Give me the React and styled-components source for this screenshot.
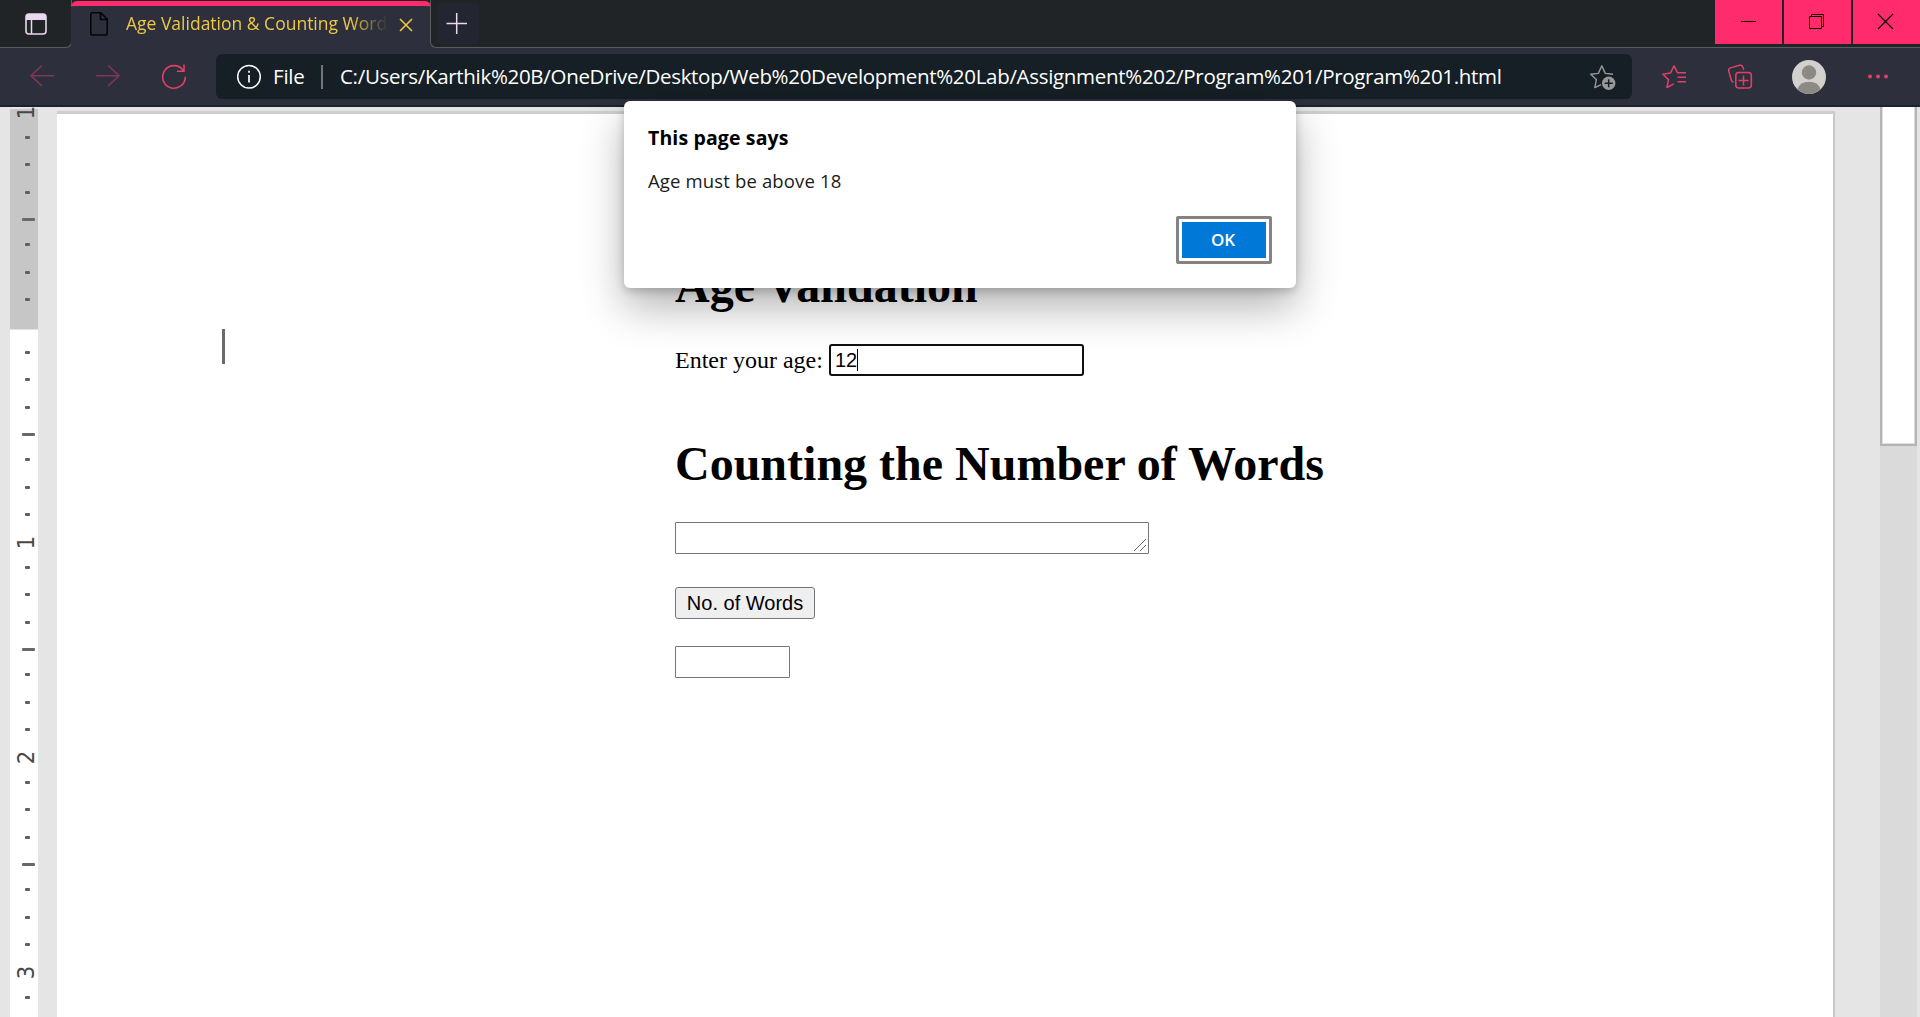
import React from "react";
import styled, { createGlobalStyle } from "styled-components";

const GlobalStyle = createGlobalStyle`
  * { box-sizing: border-box; }
  html, body { margin: 0; padding: 0; overflow: hidden; }
`;

const uiFont = `"Open Sans", "Noto Sans", sans-serif`;
const accent = "#e03f66";
const chrome = "#2d303c";
const dark = "#212427";
const edge = "#5a5d5e";

const Window = styled.div`
  position: relative;
  width: 1920px;
  height: 1017px;
  display: flex;
  flex-direction: column;
  overflow: hidden;
  background: #e5e5e5;
  font-family: ${uiFont};
`;

const TabStrip = styled.header`
  height: 48px;
  flex: none;
  display: flex;
  background: ${chrome};
`;

const StripStart = styled.div`
  width: 72px;
  display: flex;
  background: ${dark};
  border-right: 1px solid ${edge};
  border-bottom: 1px solid ${edge};
  border-radius: 0 0 6px 0;
  padding: 12px 0 0 24px;
`;

const TabSlot = styled.div`
  width: 358px;
  background: linear-gradient(${dark} 20px, ${chrome} 20px);
`;

const Tab = styled.div`
  height: 47px;
  margin: 1px -1px 0;
  display: flex;
  border-top: 5px solid #ff2b6d;
  border-radius: 6px 6px 0 0;
  background: ${chrome};
  padding: 0 13px 0 18px;
`;

const TabTitle = styled.div`
  width: 262px;
  margin: 0 4px 0 17px;
  overflow: hidden;
  white-space: nowrap;
  color: #edc746;
  font-size: 17.5px;
  line-height: 24px;
  padding-top: 5px;
  letter-spacing: ${(p) => p.$track}px;
  mask-image: linear-gradient(to right, #000 225px, transparent 262px);
`;

const StripEnd = styled.div`
  flex: 1;
  display: flex;
  background: ${dark};
  border-left: 1px solid ${edge};
  border-bottom: 1px solid ${edge};
  border-radius: 0 0 0 6px;
  padding-left: 6px;
`;

const NewTab = styled.button`
  width: 42px;
  height: 41px;
  margin: 3px auto 0 0;
  padding: 0;
  border: 0;
  border-radius: 3px;
  background: #232530;
`;

const WindowButtons = styled.div`
  display: flex;
  gap: 2px;
  height: 44px;
`;

const WindowButton = styled.button`
  width: 67px;
  height: 44px;
  padding: 0;
  border: 0;
  background: #ff2b6d;
`;

const Toolbar = styled.nav`
  height: 59px;
  flex: none;
  display: flex;
  align-items: flex-start;
  padding: 6px 24px;
  background: ${chrome};
  border-bottom: 2px solid #182430;
`;

const ToolGroup = styled.div`
  display: flex;
  gap: ${(p) => p.$gap}px;
  padding-top: 5px;
`;

const Address = styled.div`
  width: 1416px;
  height: 45px;
  margin: 0 24px;
  display: flex;
  align-items: center;
  background: #151f25;
  border-radius: 6px;
  padding: 0 10px 0 15px;
  color: #fff;
  font-size: 20.5px;
  line-height: 28px;
  white-space: nowrap;
`;

const Scheme = styled.span`
  width: 48px;
  margin-left: 6px;
  padding-bottom: 2px;
  letter-spacing: -0.2px;
`;

const Divider = styled.span`
  width: 2px;
  height: 24px;
  background: #70767a;
`;

const Url = styled.span`
  flex: 1;
  margin-left: 17px;
  padding-bottom: 2px;
  letter-spacing: ${(p) => p.$track}px;
`;

const Icon = styled.svg`
  display: block;
  flex: none;
  fill: none;
`;

const Viewport = styled.main`
  flex: 1;
  display: flex;
  overflow: hidden;
`;

const Ruler = styled.aside`
  width: 27.5px;
  height: 910px;
  margin: 0 19.5px 0 10px;
  padding-top: 3.6px;
  display: flex;
  flex-direction: column;
  flex: none;
  background: linear-gradient(#e5e5e5 1.5px, #c6c6c6 2px, #c6c6c6 221.5px, #fff 223.5px);
`;

const Step = styled.div`
  height: ${(p) => p.$size}px;
  flex: none;
`;

const Tick = styled.div`
  width: ${(p) => (p.$long ? 13 : 5)}px;
  height: 3px;
  margin-left: ${(p) => (p.$long ? 12 : 15)}px;
  background: ${(p) => (p.$long ? "#686868" : "#606060")};
  border-radius: 1px;
`;

const Digit = styled.div`
  width: 25px;
  height: 3px;
  margin-left: 4px;
  color: #484848;
  font-family: "DejaVu Sans Condensed", "DejaVu Sans", sans-serif;
  font-size: 23.5px;
  font-stretch: condensed;
  line-height: 3px;
  text-align: center;
  transform: rotate(-90deg);
`;

const Sheet = styled.section`
  width: 1778px;
  margin-top: 4px;
  display: flex;
  align-items: flex-start;
  flex: none;
  height: 920px;
  background: #fff;
  border-top: 3px solid #cecece;
  border-right: 2px solid #c8c8c8;
`;

const SheetCaret = styled.span`
  width: 3px;
  height: 35px;
  margin: 215px 0 0 165px;
  background: #6a6a6a;
`;

const Form = styled.form`
  margin: 144px 0 0 450px;
  color: #000;
  font-family: "Liberation Serif", serif;
  font-size: 24px;
`;

const Heading = styled.h1`
  margin: 0;
  font-size: 48px;
  line-height: 55px;
  font-weight: bold;
`;

const AgeRow = styled.div`
  display: flex;
  align-items: center;
  height: 32px;
  margin: 31px 0 60px;
`;

const AgeLabel = styled.label`
  width: 154px;
  line-height: 28px;
  padding-bottom: 1px;
`;

const AgeField = styled.div`
  width: 255px;
  height: 32px;
  display: flex;
  align-items: center;
  border: 2px solid #101010;
  border-radius: 3px;
  padding-left: 4px;
  font: 20px "Liberation Sans", sans-serif;
`;

const TextCaret = styled.span`
  width: 1px;
  height: 22px;
  background: #000;
`;

const WordsArea = styled.div`
  width: 474px;
  height: 32px;
  margin: 31px 0 33px;
  display: flex;
  justify-content: flex-end;
  align-items: flex-end;
  padding: 0 2px 2px 0;
  border: 1px solid #767676;
  border-radius: 1px;
`;

const CountButton = styled.button`
  display: block;
  width: 140px;
  height: 32px;
  padding: 0;
  border: 1px solid #767676;
  border-radius: 3px;
  background: #efefef;
  color: #000;
  font: 20px "Liberation Sans", sans-serif;
`;

const CountField = styled.div`
  width: 115px;
  height: 32px;
  margin-top: 27px;
  border: 1px solid #767676;
  border-radius: 1px;
`;

const ScrollTrack = styled.div`
  width: 37px;
  margin-left: 45px;
  flex: none;
  background: #dadada;
`;

const ScrollThumb = styled.div`
  height: 339px;
  border: 2px solid #b4b4b4;
  border-top: 0;
  background: #fff;
  box-shadow: inset 1px 0 #dcdcdc, inset -1px -1px #dcdcdc;
`;

const Dialog = styled.div`
  position: absolute;
  left: 624px;
  top: 101px;
  width: 672px;
  height: 187px;
  display: flex;
  flex-direction: column;
  padding: 23px 24px 24px;
  background: #fff;
  border-radius: 6px;
  box-shadow: 0 19px 43px rgba(0, 0, 0, 0.3), 0 3px 10px rgba(0, 0, 0, 0.2);
`;

const DialogTitle = styled.div`
  color: #000;
  font-size: 19.5px;
  line-height: 28px;
  font-weight: 700;
  letter-spacing: ${(p) => p.$track}px;
`;

const DialogText = styled.div`
  margin-top: 15px;
  color: #1b1b1b;
  font-size: 18.5px;
  line-height: 28px;
  letter-spacing: ${(p) => p.$track}px;
`;

const OkButton = styled.button`
  align-self: flex-end;
  width: 96px;
  height: 48px;
  margin-top: 21px;
  padding: 0 2px 1px 0;
  color: #fff;
  background: #0078d7;
  border: 3px solid #838383;
  border-radius: 2px;
  box-shadow: inset 0 0 0 3px #fff;
  font: 600 17px/24px ${uiFont};
`;

const MarkIcon = ({ x, y = 59, w = 36, h = 36, children }) => (
  <Icon width={w} height={h} viewBox={`${x} ${y} ${w} ${h}`}>{children}</Icon>
);

const marks = [
  "1", ".", ".", ".", "-", ".", ".", ".",
  "", ".", ".", ".", "-", ".", ".", ".",
  "1", ".", ".", ".", "-", ".", ".", ".",
  "2", ".", ".", ".", "-", ".", ".", ".",
  "3", ".",
];

const RulerMark = ({ mark, index }) => (
  <Step $size={index % 4 === 0 ? 25 : 27.5}>
    {mark === "." || mark === "-" ? <Tick $long={mark === "-"} /> : <Digit>{mark}</Digit>}
  </Step>
);

export default function App() {
  return (
    <Window>
      <GlobalStyle />
      <TabStrip>
        <StripStart>
          <MarkIcon x={24} y={12} w={24} h={24}>
            <rect x="26" y="14" width="20" height="20" rx="3" stroke="#ead8f1" strokeWidth="1.6" />
            <path d="M26 20v-3q0-3 3-3h14q3 0 3 3v3z" fill="#ead8f1" />
            <path d="M31.5 19v15" stroke="#ead8f1" strokeWidth="1.5" />
          </MarkIcon>
        </StripStart>
        <TabSlot>
          <Tab>
            <MarkIcon x={89} y={6} w={20} h={36}>
              <path d="M92.5 12.8h8.3l6.4 6.4v14.1q0 1.7-1.7 1.7h-13q-1.7 0-1.7-1.7V14.500q0-1.700 1.700-1.700zM100.500 13v6.500h6.500" stroke="#050505" strokeWidth="1.6" />
            </MarkIcon>
            <TabTitle $track={0}>Age Validation &amp; Counting Words</TabTitle>
            <MarkIcon x={392} y={6} w={26} h={36}>
              <path d="M400 19l12 12M412 19l-12 12" stroke="#edc746" strokeWidth="1.6" />
            </MarkIcon>
          </Tab>
        </TabSlot>
        <StripEnd>
          <NewTab>
            <MarkIcon x={437} y={3} w={42} h={41}>
              <path d="M446.500 23.500h20.500M456.700 13v21" stroke="#ead8f1" strokeWidth="1.5" />
            </MarkIcon>
          </NewTab>
          <WindowButtons>
            <WindowButton>
              <MarkIcon x={1715} y={0} w={67} h={44}><path d="M1741 21.500h15" stroke="#000" /></MarkIcon>
            </WindowButton>
            <WindowButton>
              <MarkIcon x={1784} y={0} w={67} h={44}>
                <path d="M1809.500 16.500h12v12h-12zM1811.500 16.500v-2h12v12h-2" stroke="#000" />
              </MarkIcon>
            </WindowButton>
            <WindowButton>
              <MarkIcon x={1853} y={0} w={67} h={44}>
                <path d="M1878 14l15 15M1893 14l-15 15" stroke="#000" strokeWidth="1.100" />
              </MarkIcon>
            </WindowButton>
          </WindowButtons>
        </StripEnd>
      </TabStrip>

      <Toolbar>
        <ToolGroup $gap={30}>
          <MarkIcon x={24}>
            <path d="M53.800 75.700H31M41.800 65.500L31 75.700l10.800 10.200" stroke="#823651" strokeWidth="1.500" />
          </MarkIcon>
          <MarkIcon x={90}>
            <path d="M96.200 75.700H119M108.200 65.500L119 75.700l-10.800 10.200" stroke="#823651" strokeWidth="1.500" />
          </MarkIcon>
          <MarkIcon x={156}>
            <path d="M183.300 70.500A11.300 11.300 0 1 0 185.300 76.700M184 64.500v6.700h-7" stroke={accent} strokeWidth="1.600" />
          </MarkIcon>
        </ToolGroup>
        <Address>
          <MarkIcon x={231}>
            <circle cx="249" cy="76.800" r="11.300" stroke="#fff" strokeWidth="1.500" />
            <path d="M249 75v7.500M249 70.800v2" stroke="#fff" strokeWidth="1.700" />
          </MarkIcon>
          <Scheme>File</Scheme>
          <Divider />
          <Url $track={-0.31}>
            C:/Users/Karthik%20B/OneDrive/Desktop/Web%20Development%20Lab/Assignment%202/Program%201/Program%201.html
          </Url>
          <MarkIcon x={1586}>
            <path d="M1613 74.300l-7.700-.9-3.500-7.600-3.500 7.600-7.600.9 5.700 5.300-1.600 8 6.300-3" stroke="#989898" strokeWidth="1.400" strokeLinejoin="round" />
            <circle cx="1608.700" cy="83.200" r="6.700" fill="#989898" />
            <path d="M1604.700 83.200h8M1608.700 79.200v8" stroke="#151f25" strokeWidth="1.500" />
          </MarkIcon>
        </Address>
        <ToolGroup $gap={30}>
          <MarkIcon x={1656}>
            <path d="M1686 72.700h-8.500l-3.500-6.900-3.500 7.300-7.700 1.100 5.700 5.400-1.600 7.900 7-3.700M1677.500 77.300h8.500M1677.500 81.800h8.500" stroke={accent} strokeWidth="1.500" strokeLinejoin="round" />
          </MarkIcon>
          <MarkIcon x={1722} w={39}>
            <rect x="1735.800" y="72.500" width="15.500" height="15.500" rx="3" stroke={accent} strokeWidth="1.600" />
            <path d="M1743.500 75.500v10M1738.500 80.500h10M1733.500 82.300q-1.700-.5-2.200-2.300l-2.500-8.800q-.7-2.500 1.600-3.300l9-2.600q2.700-.7 3.400 1.700l1 2.700" stroke={accent} strokeWidth="1.500" />
          </MarkIcon>
          <MarkIcon x={1791} w={39}>
            <circle cx="1809" cy="77" r="17" fill="#d3d1ce" />
            <path d="M1797.500 89q2.500-7.300 11.500-7.300T1820.500 89q-4.700 5-11.500 5t-11.500-5z" fill="#8d8985" />
            <circle cx="1809" cy="72.500" r="7.200" fill="#8d8985" />
          </MarkIcon>
          <MarkIcon x={1860}>
            <path d="M1870 76.500h.01M1878 76.500h.01M1886 76.500h.01" stroke={accent} strokeWidth="4" strokeLinecap="round" />
          </MarkIcon>
        </ToolGroup>
      </Toolbar>

      <Viewport>
        <Ruler>
          {marks.map((mark, i) => <RulerMark key={i} mark={mark} index={i} />)}
        </Ruler>
        <Sheet>
          <SheetCaret />
          <Form>
            <Heading>Age Validation</Heading>
            <AgeRow>
              <AgeLabel>Enter your age:</AgeLabel>
              <AgeField>12<TextCaret /></AgeField>
            </AgeRow>
            <Heading>Counting the Number of Words</Heading>
            <WordsArea>
              <Icon width="12" height="12" viewBox="0 0 12 12">
                <path d="M0 12L12 0M6 12l6-6" stroke="#555" strokeWidth="0.900" />
              </Icon>
            </WordsArea>
            <CountButton type="button">No. of Words</CountButton>
            <CountField />
          </Form>
        </Sheet>
        <ScrollTrack><ScrollThumb /></ScrollTrack>
      </Viewport>

      <Dialog role="dialog">
        <DialogTitle $track={0.13}>This page says</DialogTitle>
        <DialogText $track={0.15}>Age must be above 18</DialogText>
        <OkButton>OK</OkButton>
      </Dialog>
    </Window>
  );
}
